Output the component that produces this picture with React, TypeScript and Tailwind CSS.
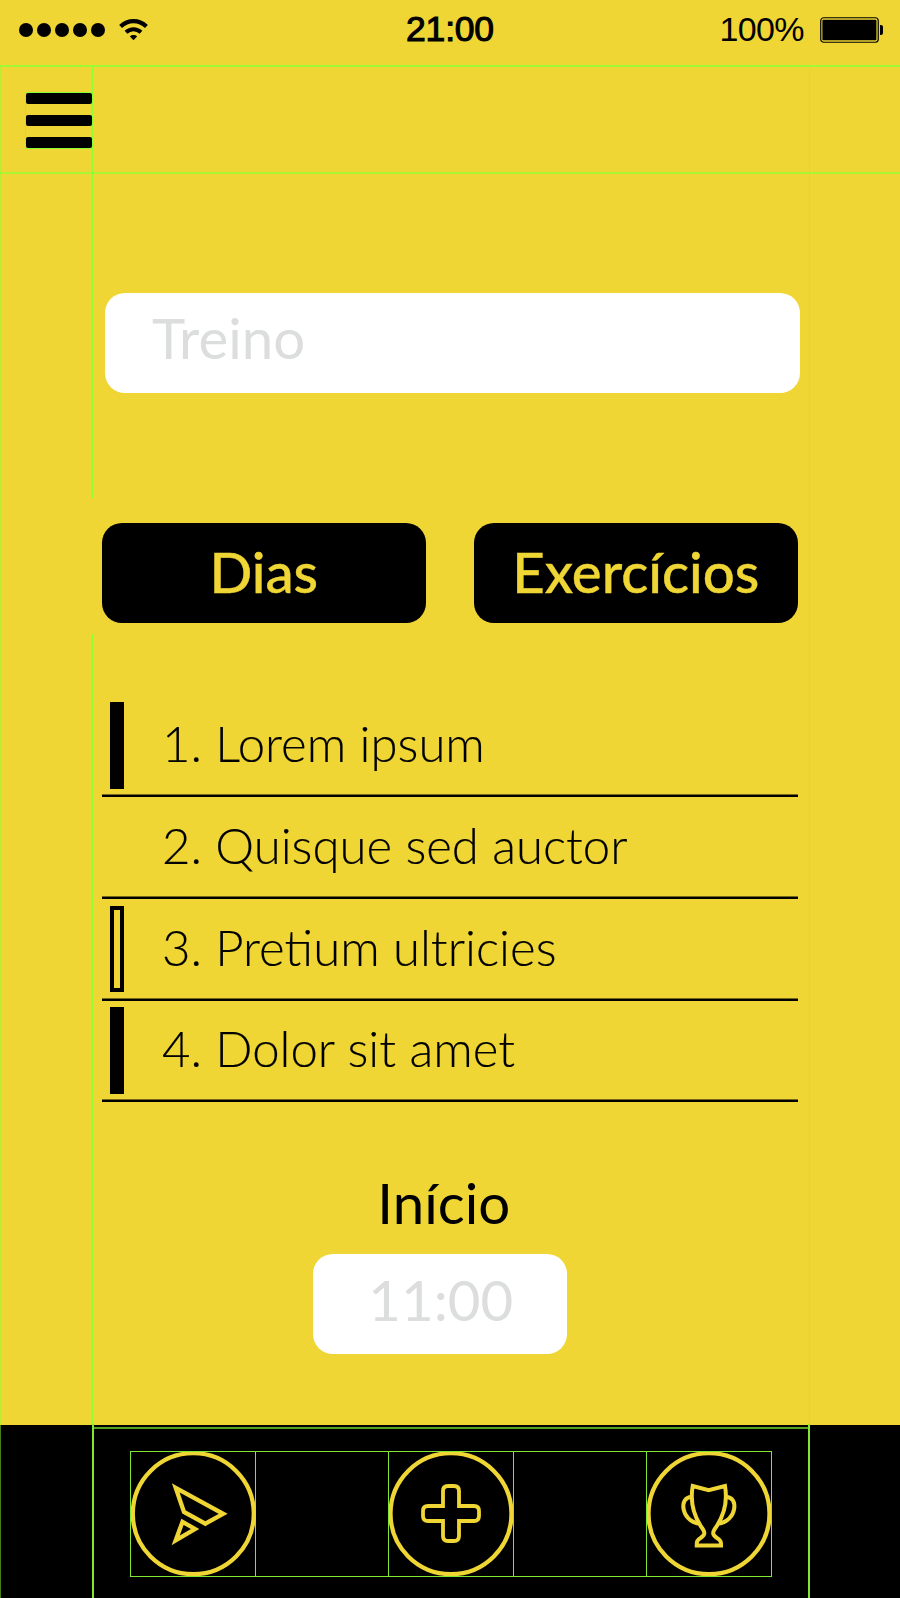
import React from "react";

type Marker = "solid" | "outline" | "none";

const items: { label: string; marker: Marker }[] = [
  { label: "1. Lorem ipsum", marker: "solid" },
  { label: "2. Quisque sed auctor", marker: "none" },
  { label: "3. Pretium ultricies", marker: "outline" },
  { label: "4. Dolor sit amet", marker: "solid" },
];

const markerClass: Record<Marker, string> = {
  solid: "bg-black",
  outline: "border-4 border-black",
  none: "",
};

function StatusBar() {
  return (
    <header className="grid h-[65px] shrink-0 grid-cols-3 items-center font-['Liberation_Sans',sans-serif]">
      <div className="flex items-center gap-[14px] pb-[6px] pl-[19px]">
        <div className="flex gap-1">
          {[0, 1, 2, 3, 4].map((n) => (
            <span key={n} className="size-[14px] rounded-full bg-black" />
          ))}
        </div>
        <svg className="h-[22px] w-[29px]" viewBox="0 0 29 22" fill="none" stroke="#000">
          <path d="M1.6 7.6C9 .4 20 .4 27.4 7.6" strokeWidth="4.2" />
          <path d="M7 13.2C11.3 9.1 17.7 9.1 22 13.2" strokeWidth="4" />
          <path d="M14.5 21.2l-3.6-3.8c2-1.9 5.200-1.9 7.200 0z" fill="#000" stroke="none" />
        </svg>
      </div>
      <div className="pb-[5px] text-center text-[35.500px] leading-none tracking-[-0.2px] [-webkit-text-stroke:1.1px_#000]">21:00</div>
      <div className="flex items-center justify-end gap-[16px] pb-[5px] pr-[17px]">
        <span className="pb-[2px] text-[34px] leading-none tracking-[-0.6px]">100%</span>
        <svg className="h-[26px] w-[63px]" viewBox="0 0 63 26">
          <rect x="0.75" y="0.75" width="57.5" height="24.500" rx="3" fill="none" stroke="#000" strokeWidth="1.2" />
          <rect x="2.400" y="2.800" width="54" height="20.400" rx="1" fill="#000" />
          <path d="M60 8h1q2 0 2 2v6q0 2-2 2h-1z" fill="#000" />
        </svg>
      </div>
    </header>
  );
}

function SendIcon() {
  return (
    <svg viewBox="0 0 126 126" className="size-[126px]" fill="none" stroke="#efd635" strokeWidth="4.300">
      <circle cx="63.300" cy="62.700" r="60.500" />
      <path d="M45.700 36.800L93.200 62.800 75.300 72.700 54 61z" />
      <path d="M52.500 70.800L65 78 45.700 89.300z" />
    </svg>
  );
}

function PlusIcon() {
  return (
    <svg viewBox="0 0 126 126" className="size-[126px]" fill="none" stroke="#efd635" strokeWidth="3.800">
      <circle cx="63" cy="62.700" r="60.500" strokeWidth="4.300" />
      <path d="M60 35h6q5 0 5 5v15h15q5 0 5 5v5q0 5-5 5H71v15q0 5-5 5h-6q-5 0-5-5V70H40q-5 0-5-5v-5q0-5 5-5h15V40q0-5 5-5z" />
    </svg>
  );
}

function TrophyIcon() {
  return (
    <svg viewBox="0 0 126 126" className="size-[126px]" fill="none" stroke="#efd635" strokeWidth="4">
      <circle cx="63" cy="62.700" r="60.500" strokeWidth="4.300" />
      <path d="M46.700 35L62.700 39.300 79 35C82 52 78 64 70.500 75.500C65.500 82 66.500 84 71 87C75 89.300 75 91 75 94.500H50.700C50.700 91 50.700 89.300 54.500 87C59 84 60 82 55 75.500C47.500 64 43.700 52 46.700 35z" />
      <path d="M45.700 46C32.500 45.500 35 70 52.500 72.500M80 46C93.200 45.500 90.700 70 73.200 72.500" />
    </svg>
  );
}

// Layout guides drawn on top of the screen.
function Guides() {
  return (
    <div className="pointer-events-none absolute inset-0">
      <div className="absolute left-0 top-[66px] h-[1532px] w-px bg-[#8cff32]/50" />
      <div className="absolute left-0 top-[65px] h-[2px] w-full bg-[#a0fa35]" />
      <div className="absolute left-0 top-[172px] h-[2px] w-full bg-[#a0fa35]/90" />
      <div className="absolute left-[92px] top-[66px] h-[432px] w-px bg-[#8cff32]" />
      <div className="absolute left-[92px] top-[634px] h-[790px] w-px bg-[#8cff32]" />
      <div className="absolute left-[92px] top-[1424px] h-[174px] w-[2px] bg-[#80e832]" />
      <div className="absolute left-[809px] top-[66px] h-[1358px] w-px bg-[#98fa35]" />
      <div className="absolute left-[808px] top-[1424px] h-[174px] w-[2px] bg-[#80e832]" />
      <div className="absolute left-[94px] top-[1427px] h-[2px] w-[714px] bg-[#57a51e]" />
      <div className="absolute left-[25px] top-[92px] h-[57px] w-[68px] border border-[#8cff32]" />
    </div>
  );
}

export default function App() {
  return (
    <div className="relative flex h-[1598px] w-[900px] flex-col overflow-hidden bg-[#efd635] font-['Lato',sans-serif] text-black">
      <StatusBar />
      <nav className="flex h-[108px] shrink-0 flex-col gap-[11px] pl-[26px] pt-[28px]">
        <span className="h-[11px] w-[66px] rounded-[2px] bg-black" />
        <span className="h-[11px] w-[66px] rounded-[2px] bg-black" />
        <span className="h-[11px] w-[66px] rounded-[2px] bg-black" />
      </nav>
      <main className="flex h-[1251.500px] shrink-0 flex-col pl-[102px] pr-[102px] pt-[120px]">
        <div className="ml-[3px] h-[100px] w-[695px] shrink-0 rounded-[20px] bg-white pl-[47px] text-[56.400px] leading-[89px] text-[#dcdedd]">
          Treino
        </div>
        <div className="mt-[130px] flex shrink-0 gap-[48.500px] text-center text-[56.400px] font-medium leading-[97px] text-[#efd635] [-webkit-text-stroke:0.4px_#efd635]">
          <button className="h-[100px] w-[323.500px] rounded-[20px] bg-black pb-[4px]">Dias</button>
          <button className="h-[100px] w-[323.500px] rounded-[20px] bg-black pb-[4px]">Exercícios</button>
        </div>
        <ul className="mt-[72.500px] shrink-0">
          {items.map((item) => (
            <li key={item.label} className="flex h-[101.700px] items-start pl-2 pt-[6.700px] shadow-[inset_0_-2.400px_0_#000]">
              <span className={`h-[86.500px] w-[14px] shrink-0 ${markerClass[item.marker]}`} />
              <span className="ml-[38px] whitespace-nowrap text-[49.100px] font-light leading-[83.500px] [-webkit-text-stroke:0.15px_#000]">{item.label}</span>
            </li>
          ))}
        </ul>
        <div className="ml-[211px] mt-[72px] flex w-[253.500px] shrink-0 flex-col items-center text-[56.400px]">
          <label className="h-[80.200px] pl-[8px] leading-[57px]">Início</label>
          <div className="h-[100px] w-[253.500px] rounded-[20px] bg-white pl-[2px] text-center leading-[90px] text-[#dcdedd]">11:00</div>
        </div>
      </main>
      <footer className="flex h-[173.500px] shrink-0 justify-center bg-black pt-[26.500px]">
        <div className="mr-[-2px] flex h-[126px] w-[642px] justify-between bg-black outline-[1.500px] outline-offset-[-1px] outline-[#80e832]">
          <div className="w-[126px] border-r border-[#80e832]"><SendIcon /></div>
          <div className="w-[126px] outline-1 outline-offset-[-1px] outline-[#80e832]"><PlusIcon /></div>
          <div className="w-[126px] outline-1 outline-offset-[-1px] outline-[#80e832]"><TrophyIcon /></div>
        </div>
      </footer>
      <Guides />
    </div>
  );
}
